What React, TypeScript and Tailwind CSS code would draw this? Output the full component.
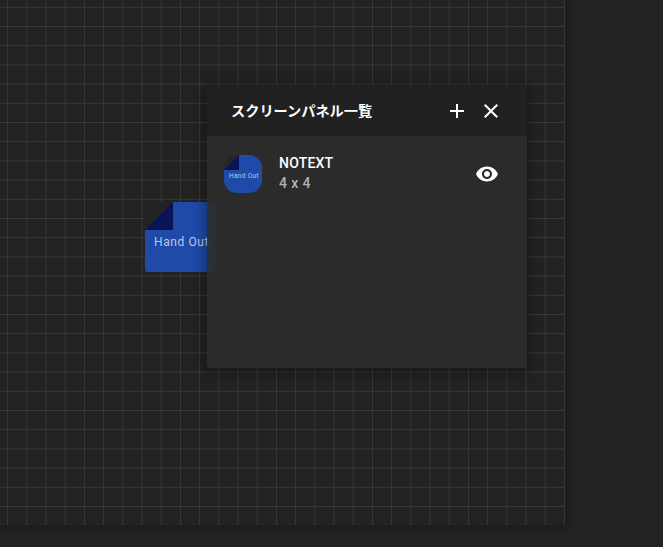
import { MdAdd, MdClose, MdVisibility } from 'react-icons/md'

const FONT = "font-['Roboto','Noto_Sans_CJK_JP',sans-serif]"

// Folded sheet used for the token on the board and the thumbnail in the list
function HandOutSheet({ large }: { large: boolean }) {
  return (
    <div
      className={
        large
          ? 'relative h-[70px] w-[70px] overflow-hidden rounded-[2px] bg-[#1f4aa8]'
          : 'relative h-[38px] w-[38px] overflow-hidden rounded-[13px] bg-[#1f4aa8]'
      }
    >
      <div
        className={
          large
            ? 'absolute top-0 left-0 h-[28px] w-[28px] bg-[#0a1258]'
            : 'absolute top-0 left-0 h-[15px] w-[15px] bg-[#0a1258]'
        }
      />
      <div
        className={
          large
            ? 'absolute top-0 left-0 h-[28px] w-[28px] bg-[#222222] [clip-path:polygon(0_0,100%_0,0_100%)]'
            : 'absolute top-0 left-0 h-[15px] w-[15px] bg-[#262626] [clip-path:polygon(0_0,100%_0,0_100%)]'
        }
      />
      <div
        className={
          large
            ? 'absolute top-[31px] left-[9px] text-[12px] leading-[18px] tracking-[0.6px] whitespace-nowrap text-[#b9cbec]'
            : 'absolute top-[17px] left-[5px] text-[6.5px] leading-[9px] tracking-[0.35px] whitespace-nowrap text-[#b9cbec]'
        }
      >
        Hand Out
      </div>
    </div>
  )
}

export default function App() {
  return (
    <div className={`h-[547px] w-[663px] overflow-hidden bg-[#222222] ${FONT}`}>
      <div className="relative h-[525px] w-[565px] bg-[#222222] bg-[repeating-linear-gradient(to_right,transparent_0,transparent_6.7px,#393939_7.6px,transparent_8.5px,transparent_19.2px),repeating-linear-gradient(to_bottom,transparent_0,transparent_6.4px,#393939_7.3px,transparent_8.2px,transparent_19.2px)] shadow-[0_0_4px_3px_rgba(0,0,0,0.2)]">
        {/* Token on the board */}
        <div className="absolute top-[202px] left-[145px]">
          <HandOutSheet large />
        </div>

        {/* Panel list */}
        <div className="absolute top-[86px] left-[207px] flex h-[282px] w-[320px] flex-col overflow-hidden rounded-[4px] bg-[#2c2c2c]/90 shadow-[0_2px_10px_5px_rgba(0,0,0,0.25)]">
          <div className="flex h-[50px] shrink-0 items-center bg-[#202020]/90 px-[24px]">
            <span className="relative top-[1px] text-[14.2px] font-bold whitespace-nowrap text-white">スクリーンパネル一覧</span>
            <div className="ml-auto flex items-center gap-[10px] text-white">
              <MdAdd size={24} />
              <MdClose size={24} />
            </div>
          </div>
          <div className="mt-[19px] flex h-[38px] items-center pl-[17px]">
            <HandOutSheet large={false} />
            <div className="mb-[2px] ml-[17px] flex flex-col">
              <span className="text-[14px] leading-[20px] font-medium tracking-[0.2px] text-white">NOTEXT</span>
              <span className="text-[14px] leading-[20px] font-medium tracking-[0.4px] text-[#b3b3b3]">4 x 4</span>
            </div>
            <MdVisibility size={24} className="mr-[28px] ml-auto text-white" />
          </div>
        </div>
      </div>
    </div>
  )
}
